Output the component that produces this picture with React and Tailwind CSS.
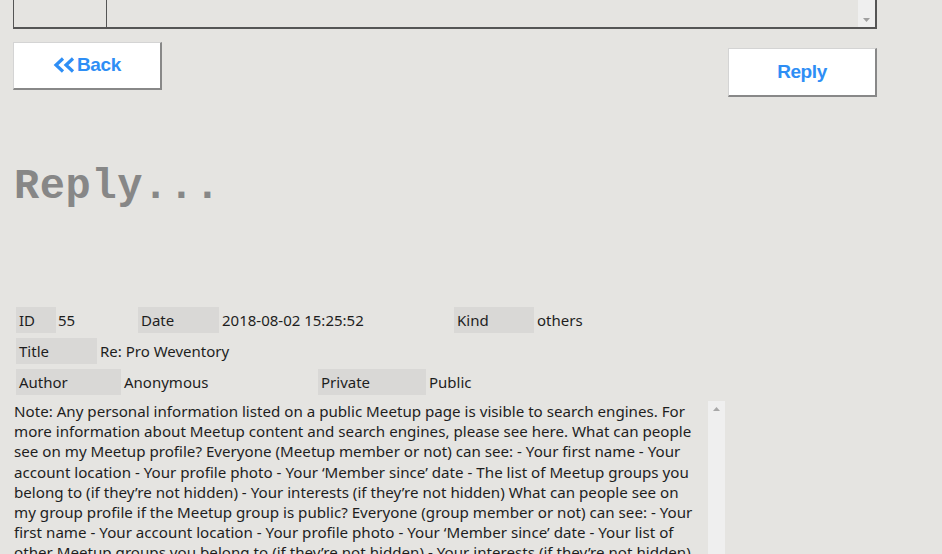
import React from "react";

const lines = [
  "Note: Any personal information listed on a public Meetup page is visible to search engines. For",
  "more information about Meetup content and search engines, please see here. What can people",
  "see on my Meetup profile? Everyone (Meetup member or not) can see: - Your first name - Your",
  "account location - Your profile photo - Your \u2018Member since\u2019 date - The list of Meetup groups you",
  "belong to (if they\u2019re not hidden) - Your interests (if they\u2019re not hidden) What can people see on",
  "my group profile if the Meetup group is public? Everyone (group member or not) can see: - Your",
  "first name - Your account location - Your profile photo - Your \u2018Member since\u2019 date - Your list of",
  "other Meetup groups you belong to (if they\u2019re not hidden) - Your interests (if they\u2019re not hidden)",
];

function Label({ w, children }) {
  return (
    <div className={`h-[26px] ${w} bg-[#d9d8d6] pl-[3px] flex items-center shrink-0`}>{children}</div>
  );
}

export default function App() {
  return (
    <div
      className="w-[942px] h-[554px] overflow-hidden bg-[#e5e4e1] text-[#1e1e1e]"
      style={{ fontFamily: '"Noto Sans", "Noto Sans CJK KR", sans-serif' }}
    >
      {/* top table remnant */}
      <div className="ml-[13px] w-[864px] h-[29px] border-l border-r-2 border-b-2 border-[#555] flex">
        <div className="w-[93px] border-r border-[#555]" />
        <div className="flex-1" />
        <div className="w-[17px] bg-[#efefef] flex items-end justify-center pb-[5px]">
          <svg width="7" height="4" viewBox="0 0 7 4"><path d="M0 0 L7 0 L3.5 4 Z" fill="#a0a0a0" /></svg>
        </div>
      </div>

      {/* buttons */}
      <div className="flex justify-between ml-[13px] w-[864px] mt-[13px] h-[55px]">
        <button
          className="w-[149px] h-[48px] bg-white border-t border-l border-[#d4d4d4] border-r-2 border-b-2 border-r-[#888] border-b-[#888] text-[#2e8ef5] font-bold text-[19px] tracking-[-0.3px] flex items-center justify-center"
          style={{ fontFamily: '"Liberation Sans", Arial, sans-serif' }}
        >
          <svg width="23" height="16" viewBox="0 0 23 16" className="mr-[1px] mb-[1px]">
            <path d="M10 1.5 L3 8 L10 14.5" fill="none" stroke="#2e8ef5" strokeWidth="3.2" strokeLinejoin="miter" />
            <path d="M20 1.5 L13 8 L20 14.5" fill="none" stroke="#2e8ef5" strokeWidth="3.2" strokeLinejoin="miter" />
          </svg>
          Back
        </button>
        <button
          className="mt-[6px] w-[149px] h-[49px] bg-white border-t border-l border-[#d4d4d4] border-r-2 border-b-2 border-r-[#888] border-b-[#888] text-[#2e8ef5] font-bold text-[19px] tracking-[-0.4px] flex items-center justify-center"
          style={{ fontFamily: '"Liberation Sans", Arial, sans-serif' }}
        >
          Reply
        </button>
      </div>

      {/* heading */}
      <div
        className="ml-[14px] mt-[60px] h-[120px] text-[42px] leading-[60px] font-bold text-[#878787] tracking-[0.6px]"
        style={{ fontFamily: '"Liberation Mono", "Courier New", monospace' }}
      >
        Reply...
      </div>

      {/* info rows */}
      <div className="ml-[16px] text-[15px] flex flex-col gap-[5px] mt-[30px]">
        <div className="flex items-center">
          <Label w="w-[40px]">ID</Label>
          <div className="w-[82px] pl-[2px]">55</div>
          <Label w="w-[81px]">Date</Label>
          <div className="w-[235px] pl-[3px]">2018-08-02 15:25:52</div>
          <Label w="w-[80px]">Kind</Label>
          <div className="pl-[3px]">others</div>
        </div>
        <div className="flex items-center">
          <Label w="w-[81px]">Title</Label>
          <div className="pl-[3px]">Re: Pro Weventory</div>
        </div>
        <div className="flex items-center">
          <Label w="w-[105px]">Author</Label>
          <div className="w-[197px] pl-[3px]">Anonymous</div>
          <Label w="w-[108px]">Private</Label>
          <div className="pl-[3px]">Public</div>
        </div>
      </div>

      {/* textarea */}
      <div className="ml-[13px] mt-[6px] w-[712px] flex">
        <div className="flex-1 pl-[1px] text-[15.15px] leading-[20.2px] whitespace-nowrap overflow-hidden">
          {lines.map((l, i) => (
            <div key={i}>{l}</div>
          ))}
        </div>
        <div className="w-[17px] h-[160px] bg-[#efefef] flex justify-center pt-[6px]">
          <svg width="7" height="4" viewBox="0 0 7 4"><path d="M3.5 0 L7 4 L0 4 Z" fill="#a8a8a8" /></svg>
        </div>
      </div>
    </div>
  );
}
